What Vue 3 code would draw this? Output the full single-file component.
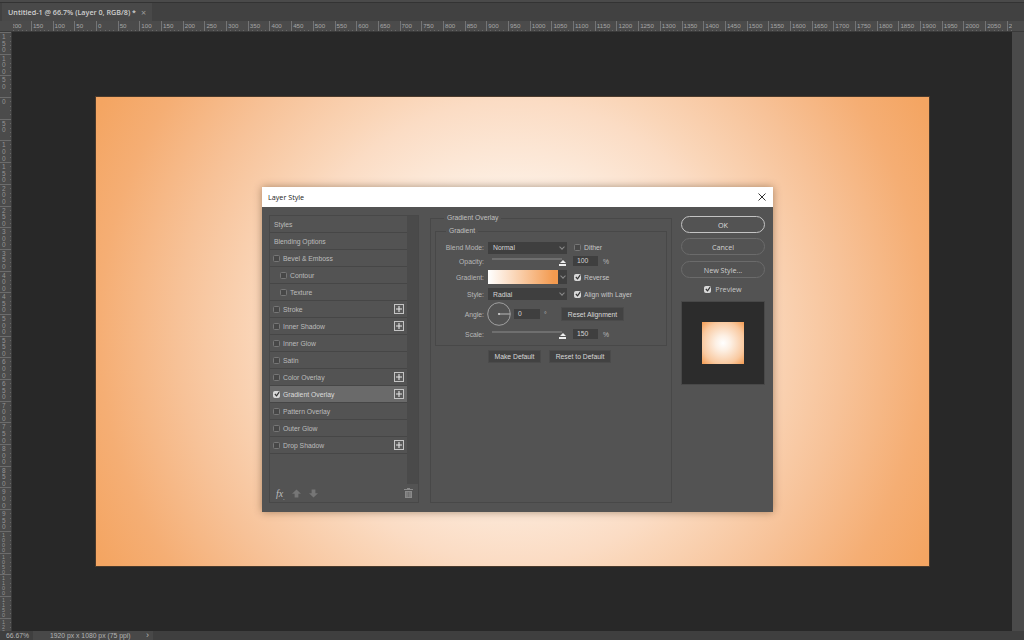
<script setup>
const hLabels = []
for (let v = 200; v > 0; v -= 50) hLabels.push(v)
for (let v = 0; v <= 2100; v += 50) hLabels.push(v)
const vLabels = []
for (let v = 150; v > 0; v -= 50) vLabels.push(v)
for (let v = 0; v <= 1200; v += 50) vLabels.push(v)
const styles = [
  { name: 'Styles' },
  { name: 'Blending Options' },
  { name: 'Bevel & Emboss', check: true },
  { name: 'Contour', check: true, sub: true },
  { name: 'Texture', check: true, sub: true },
  { name: 'Stroke', check: true, plus: true },
  { name: 'Inner Shadow', check: true, plus: true },
  { name: 'Inner Glow', check: true },
  { name: 'Satin', check: true },
  { name: 'Color Overlay', check: true, plus: true },
  { name: 'Gradient Overlay', check: true, plus: true, on: true },
  { name: 'Pattern Overlay', check: true },
  { name: 'Outer Glow', check: true },
  { name: 'Drop Shadow', check: true, plus: true },
]
</script>

<template>
  <div class="app">
    <div class="topline"></div>
    <div class="tabbar">
      <div class="tab">
        <span>Untitled-1 @ 66.7% (Layer 0, RGB/8) *</span>
        <span class="tab-x">×</span>
      </div>
    </div>
    <div class="hruler">
      <div class="corner"></div>
      <div class="hticks">
        <div v-for="(l, i) in hLabels" :key="i" class="htick">{{ l }}</div>
      </div>
      <div class="hruler-end"></div>
    </div>
    <div class="middle">
      <div class="vruler">
        <div v-for="(l, i) in vLabels" :key="i" class="vtick" :class="{ long: l >= 1000 }">{{ l }}</div>
      </div>
      <div class="canvas">
        <div class="doc"></div>
      </div>
      <div class="vscroll"></div>
    </div>
    <div class="status">
      <div class="zoom">66.67%</div>
      <div class="docinfo">
        <span>1920 px x 1080 px (75 ppi)</span>
        <span class="chev">›</span>
      </div>
    </div>

    <div class="dialog">
      <div class="titlebar">
        <span>Layer Style</span>
        <svg class="close" width="8" height="8" viewBox="0 0 8 8">
          <path d="M.5 .5L7.5 7.5M7.5 .5L.5 7.5" stroke="#333" stroke-width="1" fill="none" />
        </svg>
      </div>
      <div class="dbody">
        <div class="left">
          <div class="listwrap">
            <div class="list">
              <div v-for="s in styles" :key="s.name" class="row" :class="{ on: s.on, sub: s.sub }">
                <span v-if="s.check" class="cb" :class="{ checked: s.on }">
                  <svg v-if="s.on" viewBox="0 0 7 7"><path d="M1 3.5L3 5.6L6 1.4" stroke="#333" stroke-width="1.4" fill="none" /></svg>
                </span>
                <span class="rowname">{{ s.name }}</span>
                <span v-if="s.plus" class="plus">
                  <svg width="6" height="6" viewBox="0 0 6 6"><path d="M3 0V6M0 3H6" stroke="#e4e4e4" stroke-width="1.1" /></svg>
                </span>
              </div>
            </div>
            <div class="track"></div>
          </div>
          <div class="tools">
            <span class="fx">fx<sub>.</sub></span>
            <svg class="arrow" width="9" height="9" viewBox="0 0 9 9"><path d="M4.5 .5L9 4.8H6.4V8.5H2.6V4.8H0Z" fill="#767676" /></svg>
            <svg class="arrow" width="9" height="9" viewBox="0 0 9 9"><path d="M4.5 8.5L9 4.2H6.4V.5H2.6V4.2H0Z" fill="#767676" /></svg>
            <svg class="trash" width="9" height="10" viewBox="0 0 9 10"><path d="M3 0H6V1H9V2H0V1H3ZM1 3H8V10H1Z" fill="#8a8a8a" /><path d="M3 4V9M4.5 4V9M6 4V9" stroke="#5d5d5d" stroke-width=".6" /></svg>
          </div>
        </div>

        <fieldset class="outer">
          <legend>Gradient Overlay</legend>
          <fieldset class="inner">
            <legend>Gradient</legend>
            <div class="form">
              <label>Blend Mode:</label>
              <div class="select"><span>Normal</span><i class="caret"></i></div>
              <div class="after"><span class="cb"></span><span>Dither</span></div>

              <label>Opacity:</label>
              <div class="slider"><i class="thumb"></i></div>
              <div class="after"><span class="num">100</span><span class="unit">%</span></div>

              <label>Gradient:</label>
              <div class="gradpick"><div class="swatch"></div><div class="gcaret"><i class="caret"></i></div></div>
              <div class="after">
                <span class="cb checked"><svg viewBox="0 0 7 7"><path d="M1 3.5L3 5.6L6 1.4" stroke="#333" stroke-width="1.4" fill="none" /></svg></span>
                <span>Reverse</span>
              </div>

              <label>Style:</label>
              <div class="select"><span>Radial</span><i class="caret"></i></div>
              <div class="after">
                <span class="cb checked"><svg viewBox="0 0 7 7"><path d="M1 3.5L3 5.6L6 1.4" stroke="#333" stroke-width="1.4" fill="none" /></svg></span>
                <span>Align with Layer</span>
              </div>

              <label>Angle:</label>
              <div class="anglecell">
                <svg class="dial" width="24" height="24" viewBox="0 0 24 24">
                  <circle cx="12" cy="12" r="11.3" fill="none" stroke="#a8a8a8" stroke-width=".9" />
                  <path d="M12 12H23" stroke="#c4c4c4" stroke-width=".9" />
                  <circle cx="12" cy="12" r="1.1" fill="#d0d0d0" />
                </svg>
                <span class="num small">0</span>
                <span class="unit deg">°</span>
              </div>
              <div class="after"><button class="flat reset">Reset Alignment</button></div>

              <label>Scale:</label>
              <div class="slider"><i class="thumb"></i></div>
              <div class="after"><span class="num">150</span><span class="unit">%</span></div>
            </div>
          </fieldset>
          <div class="defaults">
            <button class="flat mk">Make Default</button>
            <button class="flat rs">Reset to Default</button>
          </div>
        </fieldset>

        <div class="right">
          <button class="pill ok">OK</button>
          <button class="pill">Cancel</button>
          <button class="pill third">New Style...</button>
          <div class="prev-check">
            <span class="cb checked"><svg viewBox="0 0 7 7"><path d="M1 3.5L3 5.6L6 1.4" stroke="#333" stroke-width="1.4" fill="none" /></svg></span>
            <span>Preview</span>
          </div>
          <div class="preview"><div class="thumbnail"></div></div>
        </div>
      </div>
    </div>
  </div>
</template>

<style>
html, body { margin: 0; background: #282828; }
</style>

<style scoped>
.app {
  position: relative;
  width: 1024px;
  height: 640px;
  overflow: hidden;
  display: flex;
  flex-direction: column;
  background: #282828;
  font-family: "Liberation Sans", sans-serif;
  font-size: 6.8px;
  color: #c8c8c8;
}
.topline { height: 3px; background: #4a4a4a; border-bottom: 1px solid #333; box-sizing: border-box; flex: none; }
.tabbar { height: 18px; background: #414141; flex: none; display: flex; }
.tab {
  width: 150px;
  margin-left: 2px;
  background: #494949;
  display: flex;
  align-items: center;
  gap: 5px;
  padding-left: 6px;
  box-sizing: border-box;
  font-family: "Open Sans", sans-serif;
  font-size: 7.2px;
  font-weight: 600;
  color: #cfcfcf;
  white-space: nowrap;
}
.tab-x { color: #9a9a9a; font-size: 9px; font-weight: 400; }
.hruler { height: 11px; flex: none; display: flex; background: #4b4b4b; border-bottom: 1px solid #3a3a3a; box-sizing: border-box; }
.corner { width: 13px; flex: none; background: #4b4b4b; }
.hticks { flex: 1; display: flex; overflow: hidden; min-width: 0; }
.htick {
  flex: 0 0 21.7px;
  box-sizing: border-box;
  border-left: 1px solid #747474;
  padding-left: 1px;
  font-size: 6.2px;
  line-height: 10px;
  color: #a6a6a6;
  overflow: hidden;
  background: repeating-linear-gradient(90deg, transparent 0 3.34px, #686868 3.34px 4.34px) left bottom / 100% 1px no-repeat;
}
.htick:first-child { margin-left: -3.8px; }
.hruler-end { width: 12px; flex: none; background: #4b4b4b; }
.middle { flex: 1; display: flex; min-height: 0; }
.vruler {
  width: 12px;
  flex: none;
  background: #4b4b4b;
  border-right: 1px solid #3a3a3a;
  box-sizing: border-box;
  overflow: hidden;
}
.vtick {
  height: 21.7px;
  box-sizing: border-box;
  border-top: 1px solid #6c6c6c;
  width: 100%;
  padding: 1px 4px 0 2px;
  font-size: 6.5px;
  line-height: 6.6px;
  color: #949494;
  word-break: break-all;
  overflow: hidden;
  background: repeating-linear-gradient(180deg, transparent 0 3.34px, #686868 3.34px 4.34px) right top / 1px 100% no-repeat;
}
.vtick.long { font-size: 5.4px; line-height: 5.1px; }
.canvas { flex: 1; position: relative; display: flex; justify-content: center; padding-top: 65px; padding-left: 1px; box-sizing: border-box; }
.doc {
  width: 833px;
  height: 469px;
  flex: none;
  background: radial-gradient(circle 470px at 50% 50%, #ffffff 0%, #fdf1e6 28%, #fbdcc4 49%, #fad6b9 54%, #f7c298 71%, #f5ae74 88%, #f4a562 100%);
  box-shadow: 0 0 0 1px #4a3a2c;
}
.vscroll { width: 12px; flex: none; background: #4a4a4a; }
.status { height: 9px; flex: none; display: flex; background: #3f3f3f; font-size: 6.8px; line-height: 9px; color: #b4b4b4; }
.zoom { width: 33px; padding-left: 6px; box-sizing: border-box; flex: none; }
.docinfo { width: 120px; flex: none; background: #484848; display: flex; justify-content: space-between; padding: 0 4px 0 17px; box-sizing: border-box; white-space: nowrap; }
.chev { font-size: 9px; line-height: 8px; }

.dialog {
  position: absolute;
  left: 262px;
  top: 187px;
  width: 511px;
  height: 325px;
  background: #535353;
  box-shadow: 0 0 8px rgba(70, 40, 10, .45);
  display: flex;
  flex-direction: column;
}
.titlebar {
  height: 20px;
  flex: none;
  background: #fff;
  color: #222;
  display: flex;
  align-items: center;
  justify-content: space-between;
  padding: 0 7px 0 6px;
  font-size: 7.2px;
  font-family: "Open Sans", sans-serif;
}
.dbody { flex: 1; display: flex; padding: 8px 8px 9px 7px; min-height: 0; }
.left {
  width: 150px;
  flex: none;
  border: 1px solid #484848;
  box-sizing: border-box;
  display: flex;
  flex-direction: column;
  height: 288px;
}
.listwrap { flex: 1; display: flex; min-height: 0; }
.list { flex: 1; min-width: 0; }
.track { width: 11px; flex: none; background: #4a4a4a; }
.row {
  height: 17px;
  box-sizing: border-box;
  border-bottom: 1px solid #464646;
  display: flex;
  align-items: center;
  padding-left: 4px;
  color: #bcbcbc;
  white-space: nowrap;
}
.row.on { background: #6a6a6a; color: #dcdcdc; }
.row.sub { padding-left: 11px; }
.rowname { flex: 1; }
.row .cb { margin: 0 3px 0 -1px; }
.cb {
  width: 5px;
  height: 5px;
  box-sizing: content-box;
  border: 1px solid #767676;
  background: #474747;
  border-radius: 1.5px;
  flex: none;
  display: inline-flex;
  align-items: center;
  justify-content: center;
}
.cb.checked { background: #d8d8d8; border-color: #d8d8d8; }
.cb svg { width: 6px; height: 6px; flex: none; }
.plus {
  width: 10px;
  height: 10px;
  box-sizing: border-box;
  border: 1px solid #c4c4c4;
  background: #5a5a5a;
  display: flex;
  align-items: center;
  justify-content: center;
  margin-right: 3px;
}
.tools { height: 18px; flex: none; display: flex; align-items: center; padding-left: 6px; background: #535353; }
.fx { font-family: "Liberation Serif", serif; font-style: italic; font-size: 10px; color: #bdbdbd; width: 16px; }
.fx sub { font-size: 6px; line-height: 0; }
.arrow { margin-right: 8px; }
.trash { margin-left: auto; margin-right: 5px; }

fieldset { margin: 0; padding: 0; border: 1px solid #484848; box-sizing: border-box; min-width: 0; }
legend { padding: 0 3px; margin-left: 10px; font-size: 6.8px; line-height: 8px; color: #c0c0c0; white-space: nowrap; }
.outer { width: 242px; height: 289px; margin: -1px 0 0 11px; flex: none; padding: 0 4px; }
.outer > legend { margin-left: 9px; }
.inner { height: 119px; margin-top: 5px; }
.form {
  display: grid;
  grid-template-columns: 48px 79px 1fr;
  grid-template-rows: 13px 14px 18px 16px 24px 16px;
  align-items: center;
  column-gap: 4px;
  margin-top: 6px;
}
.form label { text-align: right; color: #b8b8b8; white-space: nowrap; }
.select {
  height: 12px;
  background: #3f3f3f;
  color: #d4d4d4;
  display: flex;
  align-items: center;
  justify-content: space-between;
  padding: 0 3px 0 5px;
  box-sizing: border-box;
}
.caret { width: 3px; height: 3px; border-right: 1px solid #8a8a8a; border-bottom: 1px solid #8a8a8a; transform: rotate(45deg); display: block; margin-top: -2px; }
.after { display: flex; align-items: center; gap: 3px; padding-left: 3px; color: #c6c6c6; white-space: nowrap; }
.slider { height: 2px; background: #6f6f6f; position: relative; margin: -5px 5px 0 4px; }
.thumb {
  position: absolute;
  right: -3.5px;
  top: 2.5px;
  width: 0;
  height: 0;
  border-left: 3.5px solid transparent;
  border-right: 3.5px solid transparent;
  border-bottom: 3.5px solid #eee;
}
.thumb::after { content: ""; position: absolute; left: -3.5px; top: 3.5px; width: 7px; height: 2px; background: #eee; }
.num { width: 25px; height: 10px; margin-left: -1px; background: #3f3f3f; color: #d4d4d4; line-height: 10px; padding-left: 4px; box-sizing: border-box; flex: none; }
.num.small { width: 26px; margin-left: 3px; }
.unit { color: #b8b8b8; margin-left: 2px; }
.unit.deg { margin-left: 4px; }
.gradpick { display: flex; height: 14px; }
.swatch { width: 70px; background: linear-gradient(90deg, #fff 0%, #f39a4f 94%); flex: none; }
.gcaret { flex: 1; background: #3f3f3f; display: flex; align-items: center; justify-content: center; }
.anglecell { display: flex; align-items: center; color: #b8b8b8; margin-left: -1px; }
.dial { flex: none; }
.flat {
  font: inherit;
  color: #d8d8d8;
  background: #424242;
  border: 1px solid #4b4b4b;
  padding: 0;
  height: 13px;
  white-space: nowrap;
}
.reset { width: 63px; height: 14px; margin-left: -13px; }
.defaults { display: flex; gap: 8px; margin: 4px 0 0 53px; }
.mk { width: 53px; }
.rs { width: 62px; }

.right { margin-left: 9px; flex: none; width: 84px; display: flex; flex-direction: column; margin-top: 1px; }
.pill {
  height: 17px;
  border-radius: 9px;
  background: #535353;
  border: 1px solid #6b6b6b;
  color: #cfcfcf;
  font-family: "Open Sans", sans-serif;
  font-size: 7.2px;
  padding: 0;
  margin-bottom: 5px;
}
.pill + .pill.third { margin-top: 1px; }
.pill.ok { border-color: #c4c4c4; color: #dedede; }
.prev-check { display: flex; align-items: center; justify-content: center; gap: 4px; height: 12px; font-family: "Open Sans", sans-serif; font-size: 7.2px; color: #c8c8c8; }
.preview { margin-top: 6px; width: 84px; height: 84px; background: #2c2c2c; display: flex; align-items: center; justify-content: center; border: 1px solid #484848; box-sizing: border-box; }
.thumbnail { width: 42px; height: 42px; background: radial-gradient(circle 30px at 50% 50%, #fff 0%, #fdf0e4 25%, #f9c9a0 70%, #f39a4f 100%); }
</style>
